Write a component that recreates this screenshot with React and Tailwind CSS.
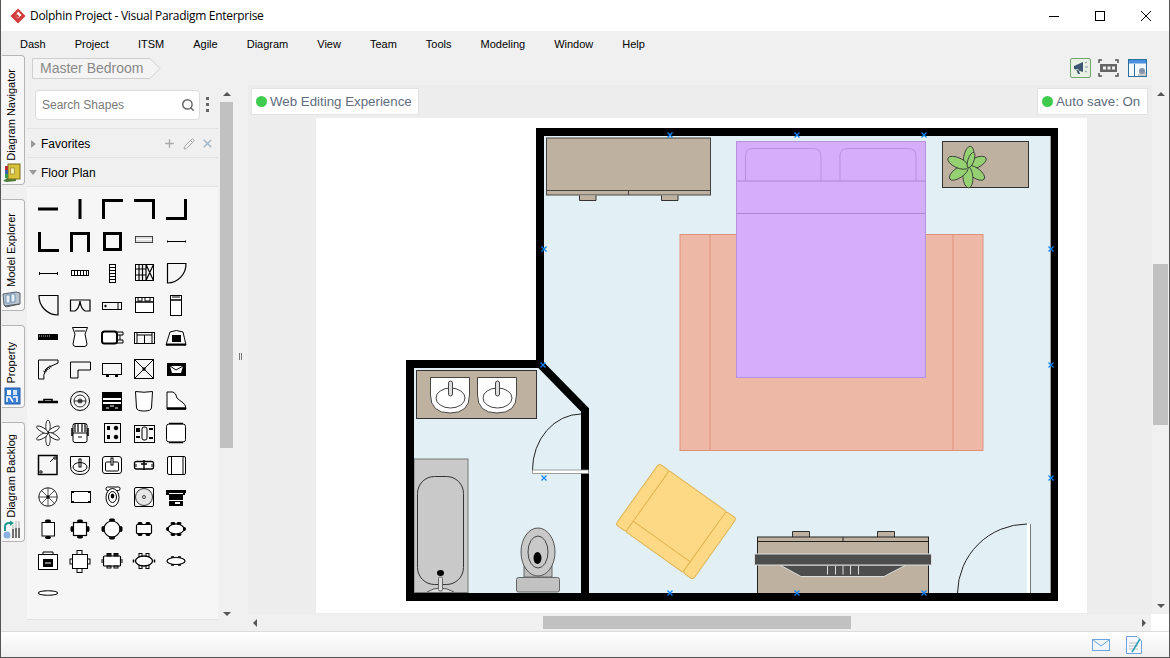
import { Search, Plus, Pencil, X } from 'lucide-react'

const MENUS = ['Dash', 'Project', 'ITSM', 'Agile', 'Diagram', 'View', 'Team', 'Tools', 'Modeling', 'Window', 'Help']

const Chair = ({ x, y, w = 5, h = 2 }) => <rect x={x} y={y} width={w} height={h} rx="1" fill="#000" />

// shape library, 32x32 cells, left to right and top to bottom
const SHAPES = [
  <path d="M6 16H26" strokeWidth="3" />,
  <path d="M16 6V26" strokeWidth="3" />,
  <path d="M7.5 26V7.5H27" strokeWidth="3" />,
  <path d="M6 7.5H25.5V26" strokeWidth="3" />,
  <path d="M25.5 6V25.5H6" strokeWidth="3" />,

  <path d="M7.5 7V25.5H27" strokeWidth="3" />,
  <path d="M7.5 27V8.5H24.5V27" strokeWidth="3" />,
  <rect x="8.5" y="8.5" width="16" height="16" strokeWidth="3" />,
  <g><rect x="7.5" y="11.5" width="17" height="6" fill="#ddd" stroke="#444" /><path d="M8 14.5H24" stroke="#fff" /></g>,
  <path d="M7.5 15.5V17.5M7.5 16.5H25.5M25.5 15.5V17.5" />,

  <path d="M7.5 15V18M7.5 16.5H25.5M25.5 15V18" />,
  <g><rect x="7" y="13" width="18" height="6" fill="#000" stroke="none" /><path d="M8 16H24" stroke="#fff" strokeWidth="4" strokeDasharray="2 1" /></g>,
  <g><rect x="13" y="7" width="7" height="19" fill="#000" stroke="none" /><path d="M16.5 8V25" stroke="#fff" strokeWidth="5" strokeDasharray="2 1" /></g>,
  <g><rect x="7.5" y="7.5" width="18" height="16" /><path d="M11 7.5V23.5M14.5 7.5V23.5M18 7.5V23.5M7.5 12H18M7.5 18H18M18 7.5L25.5 23.5M25.5 7.5L18 23.5" strokeWidth="1.2" /></g>,
  <path d="M7.5 26V6.5H26A19 19 0 0 1 7.5 26Z" strokeWidth="1.2" />,

  <path d="M7 6.5H26V26A19 19 0 0 1 7 6.5Z" strokeWidth="1.2" />,
  <path d="M6.5 11H26V22H21Q17 20 16 12Q15 20 11 22H6.5Z" strokeWidth="1.2" />,
  <g><rect x="6.5" y="13.5" width="19" height="7" /><circle cx="9.5" cy="17" r="0.8" fill="#000" /><path d="M22 14V20" /></g>,
  <g><rect x="7.5" y="8.5" width="18" height="15" fill="#fff" /><path d="M7.5 13H25.5" strokeWidth="1.5" /><path d="M10 8.5H14V12H10ZM17 8.5H22V12H17Z" /></g>,
  <g><rect x="10.5" y="6.5" width="11" height="20" fill="#fff" /><path d="M10.5 11H21.5" strokeWidth="1.5" /><path d="M12 8H20" /></g>,

  <g><rect x="6" y="13" width="20" height="6" fill="#000" stroke="none" /><path d="M7 15H18" stroke="#bbb" strokeDasharray="1 1" /></g>,
  <path d="M8.5 6.5H23.5L21 13L23 23Q23 25.5 20 25.5H12Q9 25.5 9 23L11 13ZM11 10H21" fill="#fff" />,
  <g><rect x="6" y="10.5" width="15" height="12" rx="2.5" fill="#fff" strokeWidth="2" /><path d="M21 11H27V14H21M21 19H27V22H21M24 14V19" /></g>,
  <g><rect x="6.5" y="11.5" width="20" height="11" /><path d="M9 11.5V22.5H24V11.5M16.5 14V22.5M9 14H24" /></g>,
  <g><path d="M6 24L10 11Q16 8 23 11L26 24Z" fill="#fff" /><rect x="12" y="14" width="9" height="7" fill="#000" stroke="none" /><path d="M6 23.5H26" strokeWidth="2" /></g>,

  <g><path d="M6.5 26V7H26V10L15 15L13 19Q11 22 12 26Z" /><path d="M12 19L19 13" strokeWidth="2.5" strokeDasharray="1 1" /></g>,
  <path d="M6.5 9H26.5V17H14V25H6.5Z" />,
  <g><rect x="6.5" y="10.5" width="19" height="11" /><path d="M10 23H13M19 23H22" strokeWidth="2" /></g>,
  <g><rect x="6.5" y="6.5" width="19" height="19" /><path d="M6.5 6.5L25.5 25.5M25.5 6.5L6.5 25.5" /><circle cx="16" cy="16" r="1.2" fill="#000" /></g>,
  <g><rect x="7" y="10" width="19" height="13" fill="#000" stroke="none" /><path d="M10 13H23L21 20H12Z" fill="#fff" stroke="none" /><path d="M10 13L16 17L23 13" /></g>,

  <g><path d="M6 17H26" strokeWidth="2.5" /><path d="M12 16V14.5H20V16" strokeWidth="1.5" /></g>,
  <g><circle cx="16" cy="16" r="9.5" /><circle cx="16" cy="16" r="6" strokeWidth="0.8" /><circle cx="16" cy="16" r="2.5" fill="#555" stroke="none" /><path d="M10 16H22" strokeWidth="0.8" /></g>,
  <g><rect x="6" y="7" width="20" height="19" fill="#000" stroke="none" /><path d="M7 14H25M7 18H25" stroke="#fff" strokeWidth="2" /><path d="M14 21H18M10 23H13M19 23H22" stroke="#fff" /></g>,
  <path d="M7.5 6.5Q16 8 24.5 6.5L23.5 23Q23 26 16 26Q9 26 8.5 23Z" fill="#fff" />,
  <g><path d="M7 24V7H13Q16 8 17 13Q19 15 22 17Q26 19 26 24Z" fill="#fff" /><path d="M7 23.5H26" strokeWidth="2.5" /></g>,

  <g>{[0, 60, 120, 180, 240, 300].map(a => <ellipse key={a} cx="16" cy="9.5" rx="2.2" ry="6.5" fill="#fff" strokeWidth="0.8" transform={`rotate(${a} 16 16)`} />)}</g>,
  <g><rect x="9" y="6.5" width="14" height="19" rx="2" fill="#fff" /><path d="M11 7V15M14 7V15M18 7V15M21 7V15" strokeWidth="1.2" /><path d="M9 16H23M14 20H18" /><path d="M8 11V19M24 11V19" strokeWidth="1.5" /></g>,
  <g><rect x="8.5" y="6.5" width="16" height="19" /><path d="M11 10H14M11 12H14M11 21H14M11 19H14" strokeWidth="2" /><circle cx="20" cy="11" r="1.8" fill="#000" /><circle cx="20" cy="20" r="1.8" fill="#000" /></g>,
  <g><rect x="6.5" y="8.5" width="20" height="17" /><rect x="14" y="10" width="5" height="13" rx="2" /><path d="M8 12H12M8 14H12M8 20H12M21 12H25M21 21H25" strokeWidth="2.2" /></g>,
  <g><rect x="6.5" y="7" width="19" height="18" rx="2.5" fill="#fff" /><path d="M9 6.5H23M9 25.5H23" strokeWidth="1.3" /></g>,

  <g><rect x="6.5" y="6.5" width="18.5" height="19" strokeWidth="1.5" /><circle cx="9" cy="23" r="1.2" /><circle cx="23" cy="9" r="1.2" /><path d="M18 13L22 9" /></g>,
  <g><path d="M6.5 7.5H25.5V17Q25.5 25.5 16 25.5Q6.5 25.5 6.5 17Z" fill="#fff" /><ellipse cx="16" cy="18" rx="7" ry="4.5" /><rect x="15" y="10" width="2" height="8" /></g>,
  <g><rect x="6.5" y="7.5" width="19" height="17" rx="2.5" fill="#fff" /><rect x="9.5" y="13" width="13" height="9" rx="1" /><rect x="15" y="9" width="2" height="7" fill="#fff" /></g>,
  <g><rect x="6.5" y="12.5" width="19" height="7.5" rx="2" fill="#fff" strokeWidth="1.3" /><path d="M16 11V21M13 15H19" strokeWidth="1.4" /><path d="M8 15V18M24 15V18" /></g>,
  <g><rect x="7.5" y="7.5" width="18" height="18" rx="1.5" fill="#fff" /><path d="M11.5 7.5V25.5M11.5 7.5H23V25.5" /></g>,

  <g><circle cx="16" cy="16" r="9.2" fill="#fff" strokeWidth="0.9" /><path d="M16 7V25M7 16H25M9.5 9.5L22.5 22.5M22.5 9.5L9.5 22.5" strokeWidth="0.7" /><circle cx="16" cy="16" r="1.2" fill="#000" /></g>,
  <g><rect x="7.5" y="10.5" width="19" height="11" fill="#fff" /><path d="M7 11H10M24 11H27M7 21H10M24 21H27" strokeWidth="2" /></g>,
  <g><rect x="10" y="6" width="14" height="3.5" rx="1.5" fill="#fff" /><ellipse cx="16.5" cy="16.5" rx="6.5" ry="9" fill="#fff" /><ellipse cx="16.5" cy="16" rx="4" ry="5.5" /><ellipse cx="16.5" cy="15" rx="1.8" ry="2.5" fill="#000" stroke="none" /></g>,
  <g><rect x="6.5" y="6.5" width="19" height="19" rx="1.5" /><circle cx="16" cy="16" r="8.5" fill="#e6e6e6" strokeWidth="0.8" /><circle cx="16" cy="16" r="1.5" strokeWidth="0.7" /></g>,
  <g><path d="M6 9H26V12H25V14H23V25H9V14H6Z" fill="#000" stroke="none" /><path d="M9 12.5H23M9 19.5H23" stroke="#fff" /><rect x="15" y="21" width="5" height="2" fill="#fff" stroke="none" /></g>,

  <g><rect x="10" y="9.5" width="12.5" height="13.5" fill="#fff" /><Chair x="13.5" y="7" /><Chair x="13.5" y="23.5" /></g>,
  <g><rect x="9.5" y="9.5" width="13" height="13" fill="#fff" strokeWidth="1.2" /><Chair x="13.5" y="7" /><Chair x="13.5" y="23" /><Chair x="7" y="13.5" w={2} h={5} /><Chair x="23" y="13.5" w={2} h={5} /></g>,
  <g><circle cx="16" cy="16" r="8" fill="#fff" strokeWidth="1.2" /><Chair x="13.5" y="6" /><Chair x="13.5" y="24" /><Chair x="6" y="13.5" w={2} h={5} /><Chair x="24" y="13.5" w={2} h={5} /></g>,
  <g><rect x="8.5" y="11.5" width="15" height="9" rx="1" fill="#fff" strokeWidth="1.2" /><Chair x="10" y="9.5" w={4} /><Chair x="18" y="9.5" w={4} /><Chair x="10" y="20.5" w={4} /><Chair x="18" y="20.5" w={4} /></g>,
  <g><ellipse cx="16" cy="16" rx="8" ry="5" fill="#fff" strokeWidth="1.2" /><Chair x="11" y="9.5" w={4} /><Chair x="17" y="9.5" w={4} /><Chair x="11" y="20.5" w={4} /><Chair x="17" y="20.5" w={4} /><Chair x="6.5" y="14.5" w={2} h={3} /><Chair x="23.5" y="14.5" w={2} h={3} /></g>,

  <g><rect x="6.5" y="9.5" width="19" height="15" fill="#fff" /><path d="M11 9.5V7H21V9.5" /><rect x="11" y="14" width="10" height="8" fill="#000" stroke="none" /><path d="M13 18H19" stroke="#fff" /></g>,
  <g><rect x="8.5" y="9.5" width="15" height="14" fill="#fff" /><rect x="13" y="5.5" width="5" height="4" /><rect x="13" y="23.5" width="5" height="4" /><rect x="6" y="14" width="2.5" height="5" /><rect x="23.5" y="14" width="2.5" height="5" /></g>,
  <g><rect x="7.5" y="11" width="17" height="10" rx="1" fill="#fff" strokeWidth="1.2" /><rect x="11" y="8.5" width="4" height="2.5" fill="#222" /><rect x="18" y="8.5" width="4" height="2.5" fill="#222" /><rect x="11" y="21" width="4" height="2" /><rect x="18" y="21" width="4" height="2" /><path d="M6 14V18M26 14V18" /></g>,
  <g><ellipse cx="16" cy="16" rx="8.5" ry="5" fill="#fff" strokeWidth="1.3" /><rect x="11" y="8.5" width="3" height="3" /><rect x="18" y="8.5" width="3" height="3" /><rect x="11" y="20.5" width="3" height="3" /><rect x="18" y="20.5" width="3" height="3" /><path d="M5.5 14.5V17.5M26.5 14.5V17.5" strokeWidth="1.5" /></g>,
  <g><ellipse cx="16" cy="16" rx="9" ry="3.5" fill="#fff" strokeWidth="1.2" /><path d="M11 12H14M18 12H21M11 20H14M18 20H21" strokeWidth="1.5" /></g>,

  <g><ellipse cx="16" cy="16" rx="9.5" ry="2.2" fill="#fff" strokeWidth="1.1" /><path d="M12 13.5H20M12 18.5H20" strokeWidth="1.2" stroke="#555" /></g>,
]

function ShapeGrid() {
  return (
    <div className="grid grid-cols-[repeat(5,32px)] auto-rows-[32px] pl-[5px] pt-[6px]">
      {SHAPES.map((s, i) => (
        <svg key={i} viewBox="0 0 32 32" className="w-8 h-8" fill="none" stroke="#000">{s}</svg>
      ))}
    </div>
  )
}

function SideTab({ label, h, mt, icon }) {
  return (
    <div className={`${h} ${mt} ml-px w-[23px] flex flex-col items-center bg-[#f7f7f7] border border-l-0 border-[#b5b5b5] rounded-r-[4px]`}>
      <div className="flex-1 flex items-end justify-center pb-[2px] pr-[4px]">
        <span className="[writing-mode:vertical-rl] rotate-180 text-[11px] leading-none whitespace-nowrap text-black">{label}</span>
      </div>
      {icon}
    </div>
  )
}

function NavIcon() {
  return (
    <svg viewBox="0 0 20 20" className="w-5 h-5 mb-[1px] mr-[2px]">
      <path d="M1 18L5 15H14V18L5 19Z" fill="#4a7d3a" />
      <rect x="6" y="1" width="12" height="15" fill="#d8c23c" stroke="#7b6c1a" />
      <rect x="8.5" y="5" width="4" height="6" fill="#f4ecb0" stroke="#8a7a20" strokeWidth="0.6" />
      <rect x="3" y="3" width="3" height="4" fill="#b52c3b" />
      <rect x="3" y="7" width="3" height="4" fill="#3c5fb3" />
      <rect x="3" y="11" width="3" height="4" fill="#3c9b4c" />
    </svg>
  )
}

function ExplorerIcon() {
  return (
    <svg viewBox="0 0 20 20" className="w-5 h-5 mb-[1px] mr-[2px]">
      <path d="M2 16L1 5L14 3L18 4V15L4 18Z" fill="#b9c4cf" stroke="#56626e" />
      <path d="M4 6H8V14H4ZM9 5H13V13H9Z" fill="#e9f0f6" stroke="#4f7ca3" strokeWidth="0.7" />
      <path d="M3 17L17 15" stroke="#555" />
    </svg>
  )
}

function PropertyIcon() {
  return (
    <svg viewBox="0 0 20 20" className="w-5 h-5 mb-[1px] mr-[2px]">
      <rect x="3" y="2" width="15" height="16" fill="#3a7fd5" stroke="#1f5da8" />
      <rect x="5" y="4" width="4" height="5" fill="#fff" />
      <rect x="11" y="4" width="4" height="5" fill="#cfe2f7" />
      <path d="M5 16V11H8L11 16M11 11H15V16" fill="none" stroke="#fff" strokeWidth="1.5" />
    </svg>
  )
}

function BacklogIcon() {
  return (
    <svg viewBox="0 0 20 20" className="w-5 h-5 mb-[1px] mr-[2px]">
      <path d="M3 11V7Q3 3 7 3H9" fill="none" stroke="#1f9a8c" strokeWidth="2" />
      <path d="M8 0.5L12 3L8 6Z" fill="#1f9a8c" />
      <circle cx="5" cy="15" r="3.5" fill="#8ab2e0" />
      <path d="M11 9V18M14 4V18M17 4V18" stroke="#6f6f6f" strokeWidth="2" />
      <path d="M11 5V9M14 1V8M17 1V8" stroke="#d0d0d0" strokeWidth="2" />
    </svg>
  )
}

function Arrow({ dir }) {
  const cls = {
    up: 'border-x-[4px] border-x-transparent border-b-[4px] border-b-[#555]',
    down: 'border-x-[4px] border-x-transparent border-t-[4px] border-t-[#555]',
    left: 'border-y-[4px] border-y-transparent border-r-[4px] border-r-[#555]',
    right: 'border-y-[4px] border-y-transparent border-l-[4px] border-l-[#555]',
  }[dir]
  return <span className={`block w-0 h-0 ${cls}`} />
}

function FloorPlan() {
  const marks = [[670, 135], [797, 135], [924, 135], [544, 249], [1051, 249], [543, 365], [1051, 365], [544, 478], [1051, 478], [670, 593], [797, 593], [924, 593]]
  const tan = '#bfb19f'
  return (
    <svg viewBox="316 118 771 495" className="block w-[771px] h-[495px]" fill="none">
      <path d="M410 597V364H540V132H1054V597Z" fill="#e2f0f5" />

      {/* rug */}
      <rect x="680" y="234.5" width="303" height="216" fill="#eeb8a7" stroke="#e0907a" />
      <path d="M710 234.5V450.5M953 234.5V450.5" stroke="#e0907a" />

      {/* bed */}
      <rect x="736.5" y="141.5" width="189" height="236" fill="#d4aef9" stroke="#b593da" />
      <path d="M745.5 181V156Q745.5 148.5 753 148.5H813Q821 148.5 821 156V181M840 181V156Q840 148.5 848 148.5H908Q916 148.5 916 156V181" stroke="#b593da" />
      <path d="M736.5 181H925.5M736.5 213.5H925.5" stroke="#aa86d2" />

      {/* cabinet */}
      <rect x="546.5" y="138" width="164" height="57" fill={tan} stroke="#444" />
      <path d="M546.5 190.5H710.5M628.5 190.5V195" stroke="#444" />
      <path d="M579.5 195.5V200.5H596V195.5M661.5 195.5V200.5H678V195.5" fill={tan} stroke="#333" />

      {/* plant table */}
      <rect x="942.5" y="141.5" width="86" height="46" fill={tan} stroke="#333" />
      <g stroke="#333" strokeWidth="0.8" fill="#95d173">
        {[10, 65, 125, 175, 235, 295].map(a => <ellipse key={a} cx="967" cy="157" rx="5" ry="11" transform={`rotate(${a} 967 167)`} />)}
        <ellipse cx="971" cy="160" rx="3" ry="8" transform="rotate(20 971 160)" />
      </g>

      {/* vanity */}
      <rect x="416.5" y="370.5" width="120" height="48" fill={tan} stroke="#333" />
      {[430.5, 477.5].map(x => (
        <g key={x} stroke="#444">
          <path d={`M${x} 377.5H${x + 39}V395Q${x + 39} 413 ${x + 19.5} 413Q${x} 413 ${x} 395Z`} fill="#fff" />
          <ellipse cx={x + 20} cy="398" rx="14.5" ry="10" fill="#fff" />
          <rect x={x + 18} y="381" width="4" height="15" rx="2" fill="#ddd" />
        </g>
      ))}

      {/* bath */}
      <rect x="414" y="459" width="54" height="133.5" fill="#c9c9c9" stroke="#777" />
      <rect x="417.5" y="476.5" width="46" height="108" rx="17" stroke="#333" />
      <ellipse cx="440.5" cy="573" rx="3.5" ry="3" fill="#000" />
      <path d="M427 592Q440 584 454 592" fill="#ddd" stroke="#555" />
      <rect x="438.5" y="577" width="4" height="14" rx="1.5" fill="#ddd" stroke="#666" />

      {/* toilet */}
      <path d="M524 565V577H552V565" fill="#bbb" stroke="#666" />
      <ellipse cx="538" cy="552" rx="17" ry="24" fill="#c9c9c9" stroke="#555" />
      <ellipse cx="538" cy="552" rx="10" ry="16" stroke="#444" />
      <ellipse cx="537.5" cy="558" rx="4" ry="6" fill="#000" />
      <rect x="516.5" y="577.5" width="43" height="14.5" rx="2" fill="#c2c2c2" stroke="#666" />

      {/* armchair */}
      <g transform="rotate(35.5 676 521.5)" fill="#fed985" stroke="#e0b352">
        <rect x="640" y="484" width="72" height="63" rx="3" />
        <rect x="640" y="546" width="72" height="13" rx="3" />
        <rect x="628.5" y="484" width="12.5" height="75" rx="3" />
        <rect x="711" y="484" width="12.5" height="75" rx="3" />
      </g>

      {/* tv unit */}
      <path d="M792.5 537V531.5H809.5V537M877.5 537V531.5H894.5V537" fill={tan} stroke="#333" />
      <rect x="757.5" y="537" width="171" height="60" fill={tan} stroke="#222" />
      <path d="M757.5 541.5H928.5M843 537V541.5" stroke="#222" />
      <path d="M780 565L801 576.5H884L906 565Z" fill="#4d4d4d" stroke="#ddd" />
      <rect x="754.5" y="554" width="177" height="11" fill="#4d4d4d" stroke="#ddd" />
      <path d="M827.5 566V574.5M835.5 566V574.5M843 566V574.5M850.5 566V574.5M858.5 566V574.5" stroke="#ddd" />

      {/* walls */}
      <path d="M410 597V364H540V132H1054V597Z" stroke="#000" strokeWidth="8" />
      <path d="M540 364L585 410V597" stroke="#000" strokeWidth="8" />

      {/* doors */}
      <path d="M532.5 470A49 56 0 0 1 581 414" stroke="#222" />
      <rect x="532.5" y="470" width="56" height="3.5" fill="#fff" stroke="#888" strokeWidth="0.8" />
      <path d="M957.5 593A70 70 0 0 1 1027 524" stroke="#222" />
      <rect x="1027" y="524" width="3" height="69" fill="#fff" />
      <path d="M1030.5 524V593" stroke="#777" />
      <path d="M1050.5 136V593" stroke="#999" />

      {marks.map(([x, y]) => (
        <path key={`${x}-${y}`} d={`M${x - 2.5} ${y - 2.5}L${x + 2.5} ${y + 2.5}M${x + 2.5} ${y - 2.5}L${x - 2.5} ${y + 2.5}`} stroke="#0a84ff" strokeWidth="1.2" />
      ))}
    </svg>
  )
}

export default function App() {
  return (
    <div className="w-[1170px] h-[658px] flex flex-col overflow-hidden bg-[#f0f0f0] border-x border-b border-[#555] font-['Liberation_Sans',Arial,sans-serif]">
      {/* title bar */}
      <div className="h-[31px] shrink-0 bg-white flex items-center pl-[9px] pt-px">
        <svg viewBox="0 0 16 16" className="w-4 h-4">
          <path d="M8 0.5L15.5 8L8 15.5L0.5 8Z" fill="#d23b3b" />
          <path d="M8 3.5L11.5 7L8 10.5L5.5 8Z" fill="#fff" />
          <path d="M7 6L9.5 8.5L8 10L5.5 8Z" fill="#d23b3b" />
        </svg>
        <span className="ml-[4px] text-[12px] text-black font-['Open_Sans',sans-serif] tracking-[-0.3px]">Dolphin Project - Visual Paradigm Enterprise</span>
        <div className="ml-auto flex items-center gap-[36px] pr-[18px]">
          <svg viewBox="0 0 10 10" className="w-[10px] h-[10px]" stroke="#000" fill="none"><path d="M0 5.5H10" /></svg>
          <svg viewBox="0 0 10 10" className="w-[10px] h-[10px]" stroke="#000" fill="none"><rect x="0.5" y="0.5" width="9" height="9" /></svg>
          <svg viewBox="0 0 10 10" className="w-[10px] h-[10px]" stroke="#000" fill="none"><path d="M0 0L10 10M10 0L0 10" /></svg>
        </div>
      </div>

      {/* menu */}
      <div className="h-[23px] shrink-0 flex items-center gap-[29px] pl-[19px] pt-[3px] text-[11px] text-black">
        {MENUS.map(m => <span key={m}>{m}</span>)}
      </div>

      <div className="flex-1 min-h-0 flex">
        {/* vertical tabs */}
        <div className="w-[26px] shrink-0 pt-px">
          <SideTab label="Diagram Navigator" h="h-[130px]" mt="mt-0" icon={<NavIcon />} />
          <SideTab label="Model Explorer" h="h-[112px]" mt="mt-[14px]" icon={<ExplorerIcon />} />
          <SideTab label="Property" h="h-[83px]" mt="mt-[14px]" icon={<PropertyIcon />} />
          <SideTab label="Diagram Backlog" h="h-[120px]" mt="mt-[14px]" icon={<BacklogIcon />} />
        </div>

        <div className="flex-1 min-w-0 flex flex-col">
          {/* breadcrumb */}
          <div className="h-[31px] shrink-0 flex items-center pl-[5px] pr-[21px] pb-[3px]">
            <div className="relative h-[21px] flex items-center pl-[7px] pr-[7px] bg-[#f4f4f4] border border-r-0 border-[#cfcfcf] rounded-l-[2px] text-[14px] text-[#8a8a8a]">
              Master Bedroom
              <svg viewBox="0 0 11 21" className="absolute left-full -top-px w-[11px] h-[21px]" fill="#f4f4f4" stroke="#cfcfcf"><path d="M0 0.5L10 10.5L0 20.5" /></svg>
            </div>
            <div className="ml-auto flex items-center gap-[7px]">
              <div className="w-[21px] h-[20px] flex items-center justify-center bg-[#e8f1e4] border border-[#6fa868] rounded-[2px]">
                <svg viewBox="0 0 16 16" className="w-4 h-4">
                  <path d="M1 6L10 2V12L1 9ZM3 9L5 14H7L5.5 9.5Z" fill="#3f5673" />
                  <path d="M12 3L14 2M12 7H15M12 11L14 12" stroke="#8a97a5" />
                </svg>
              </div>
              <svg viewBox="0 0 21 18" className="w-[21px] h-[18px] mr-[2px]" fill="none">
                <path d="M1 4V1H4M17 1H20V4M1 14V17H4M17 17H20V14" stroke="#555" strokeWidth="1.5" />
                <rect x="2" y="5" width="17" height="8" fill="#666" />
                <path d="M5 7.5H8V10.5H5ZM9.5 7.5H12.5V10.5H9.5ZM14 7.5H17V10.5H14Z" fill="#eee" />
              </svg>
              <svg viewBox="0 0 20 20" className="w-5 h-5" fill="none">
                <rect x="0.5" y="1.5" width="18" height="17" fill="#f3f8fc" stroke="#2b6f9e" />
                <rect x="1" y="2" width="17" height="3.5" fill="#4a8fe0" />
                <path d="M6.5 6V18" stroke="#2b6f9e" />
                <circle cx="14" cy="13" r="3" fill="#7f93ad" />
                <path d="M10 17H19M11 15H18" stroke="#9a9a9a" />
              </svg>
            </div>
          </div>

          <div className="flex-1 min-h-0 flex">
            {/* shapes panel */}
            <div className="w-[191px] shrink-0 flex flex-col h-[535px]">
              <div className="h-[44px] shrink-0 flex items-center pl-[8px] pb-[4px] border-b border-[#e2e2e2]">
                <div className="w-[165px] h-[30px] flex items-center justify-between pl-[6px] pr-[4px] bg-white border border-[#dcdcdc] rounded-[4px] text-[12px] text-[#7a7a7a]">
                  Search Shapes
                  <Search size={14} strokeWidth={2.5} className="text-[#666]" />
                </div>
                <div className="ml-[6px] flex flex-col gap-[3px]">
                  <span className="w-[3px] h-[3px] bg-[#666]" />
                  <span className="w-[3px] h-[3px] bg-[#666]" />
                  <span className="w-[3px] h-[3px] bg-[#666]" />
                </div>
              </div>
              <div className="h-[29px] shrink-0 flex items-center pl-[4px] pr-[4px] pt-px border-b border-[#e2e2e2] text-[12px] text-black">
                <span className="block w-0 h-0 border-y-[4.5px] border-y-transparent border-l-[5px] border-l-[#999]" />
                <span className="ml-[5px]">Favorites</span>
                <Plus size={13} strokeWidth={2.5} className="ml-auto text-[#a9a9a9]" />
                <Pencil size={12} className="ml-[7px] text-[#a9a9a9]" />
                <X size={13} strokeWidth={2.5} className="ml-[6px] text-[#9db6cb]" />
              </div>
              <div className="h-[29px] shrink-0 flex items-center pl-[2px] pt-px border-b border-[#e2e2e2] text-[12px] text-black">
                <span className="block w-0 h-0 border-x-[4.5px] border-x-transparent border-t-[5px] border-t-[#999]" />
                <span className="ml-[4px]">Floor Plan</span>
              </div>
              <div className="flex-1 bg-[#f6f6f6] border-b border-[#e2e2e2]">
                <ShapeGrid />
              </div>
            </div>

            {/* panel scrollbar */}
            <div className="w-[13px] shrink-0 ml-[2px] flex flex-col items-center">
              <div className="h-[17px] flex items-center justify-center"><Arrow dir="up" /></div>
              <div className="w-[13px] h-[346px] bg-[#c1c1c1]" />
              <div className="flex-1" />
              <div className="h-[17px] mb-[9px] flex items-center justify-center"><Arrow dir="down" /></div>
            </div>

            {/* splitter */}
            <div className="w-[15px] shrink-0 flex items-center justify-center">
              <div className="flex gap-px mb-[4px]">
                <span className="w-px h-[7px] bg-[#777]" />
                <span className="w-px h-[7px] bg-[#777]" />
              </div>
            </div>

            {/* diagram */}
            <div className="flex-1 min-w-0 flex flex-col">
              <div className="flex-1 min-h-0 flex">
                <div className="relative flex-1 min-w-0 bg-[#ededed] pt-[33px] pl-[68px]">
                  <div className="w-[771px] h-[495px] bg-white">
                    <FloorPlan />
                  </div>
                  <div className="absolute left-[3px] top-[3px] h-[27px] w-[168px] flex items-center pl-[4px] gap-[3px] bg-white border border-[#e3e3e3] text-[13.3px] whitespace-nowrap text-[#5e6c80]">
                    <span className="w-[11px] h-[11px] rounded-full bg-[#3ecb4e]" />
                    Web Editing Experience
                  </div>
                  <div className="absolute right-[4px] top-[3px] h-[27px] w-[111px] flex items-center pl-[4px] gap-[3px] bg-white border border-[#e3e3e3] text-[13.3px] whitespace-nowrap text-[#5e6c80]">
                    <span className="w-[11px] h-[11px] rounded-full bg-[#3ecb4e]" />
                    Auto save: On
                  </div>
                </div>
                <div className="w-[17px] shrink-0 flex flex-col items-center bg-[#f0f0f0]">
                  <div className="h-[18px] flex items-center justify-center"><Arrow dir="up" /></div>
                  <div className="w-[15px] h-[161px] mt-[161px] bg-[#c1c1c1]" />
                  <div className="flex-1" />
                  <div className="h-[17px] flex items-center justify-center"><Arrow dir="down" /></div>
                </div>
              </div>
              <div className="h-[17px] shrink-0 flex items-center">
                <div className="w-[903px] h-full flex items-center bg-[#f0f0f0] px-[5px]">
                  <Arrow dir="left" />
                  <div className="w-[308px] h-[13px] ml-[286px] bg-[#c1c1c1]" />
                  <div className="flex-1" />
                  <Arrow dir="right" />
                </div>
                <div className="flex-1 h-full bg-white" />
              </div>
            </div>
          </div>
        </div>
      </div>

      {/* status bar */}
      <div className="h-[26px] shrink-0 border-t border-[#dcdcdc] bg-gradient-to-b from-white to-[#efefef] flex items-center justify-end gap-[16px] pr-[27px]">
        <svg viewBox="0 0 18 12" className="w-[18px] h-[12px]" fill="none" stroke="#6ea4dc"><rect x="0.5" y="0.5" width="17" height="11" fill="#f0f6fc" /><path d="M1 1L9 7L17 1" /></svg>
        <svg viewBox="0 0 16 18" className="w-4 h-[18px]" fill="none">
          <path d="M0.5 0.5H11L15.5 5V17.5H0.5Z" fill="#f4f7fb" stroke="#6ea4dc" />
          <path d="M3 7H12M3 10H12M3 13H12" stroke="#c0c0c0" />
          <path d="M6 16L14 3" stroke="#2aa0b8" strokeWidth="1.5" />
        </svg>
      </div>
    </div>
  )
}
